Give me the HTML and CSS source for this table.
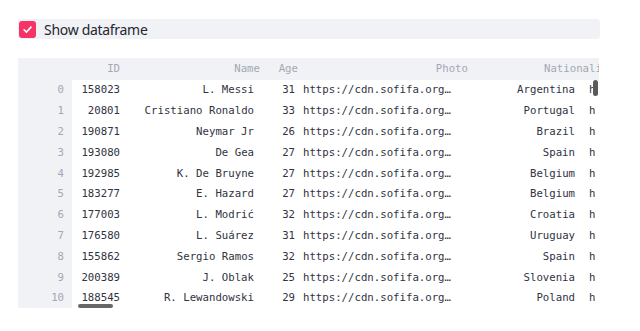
FILE: index.html
```html
<!DOCTYPE html>
<html>
<head>
<meta charset="utf-8">
<link rel="stylesheet" href="styles.css">
</head>
<body>
<div class="app">
  <label class="check-row">
    <span class="box"><svg width="11" height="11" viewBox="0 0 12 12"><path d="M2.3 6.3 L4.9 8.8 L9.8 3.4" fill="none" stroke="#fff" stroke-width="1.8" stroke-linecap="round" stroke-linejoin="round"/></svg></span>
    <span class="label">Show dataframe</span>
  </label>

  <div class="table">
    <div class="row head">
      <div class="c idx"></div>
      <div class="c id">ID</div>
      <div class="c name">Name</div>
      <div class="c age">Age</div>
      <div class="c photo">Photo</div>
      <div class="c nat">Nationality</div>
      <div class="c flag">Flag</div>
    </div>
    <div class="row"><div class="c idx">0</div><div class="c id">158023</div><div class="c name">L. Messi</div><div class="c age">31</div><div class="c photo">https://cdn.sofifa.org…</div><div class="c nat">Argentina</div><div class="c flag">https://cdn</div></div>
    <div class="row"><div class="c idx">1</div><div class="c id">20801</div><div class="c name">Cristiano Ronaldo</div><div class="c age">33</div><div class="c photo">https://cdn.sofifa.org…</div><div class="c nat">Portugal</div><div class="c flag">https://cdn</div></div>
    <div class="row"><div class="c idx">2</div><div class="c id">190871</div><div class="c name">Neymar Jr</div><div class="c age">26</div><div class="c photo">https://cdn.sofifa.org…</div><div class="c nat">Brazil</div><div class="c flag">https://cdn</div></div>
    <div class="row"><div class="c idx">3</div><div class="c id">193080</div><div class="c name">De Gea</div><div class="c age">27</div><div class="c photo">https://cdn.sofifa.org…</div><div class="c nat">Spain</div><div class="c flag">https://cdn</div></div>
    <div class="row"><div class="c idx">4</div><div class="c id">192985</div><div class="c name">K. De Bruyne</div><div class="c age">27</div><div class="c photo">https://cdn.sofifa.org…</div><div class="c nat">Belgium</div><div class="c flag">https://cdn</div></div>
    <div class="row"><div class="c idx">5</div><div class="c id">183277</div><div class="c name">E. Hazard</div><div class="c age">27</div><div class="c photo">https://cdn.sofifa.org…</div><div class="c nat">Belgium</div><div class="c flag">https://cdn</div></div>
    <div class="row"><div class="c idx">6</div><div class="c id">177003</div><div class="c name">L. Modrić</div><div class="c age">32</div><div class="c photo">https://cdn.sofifa.org…</div><div class="c nat">Croatia</div><div class="c flag">https://cdn</div></div>
    <div class="row"><div class="c idx">7</div><div class="c id">176580</div><div class="c name">L. Suárez</div><div class="c age">31</div><div class="c photo">https://cdn.sofifa.org…</div><div class="c nat">Uruguay</div><div class="c flag">https://cdn</div></div>
    <div class="row"><div class="c idx">8</div><div class="c id">155862</div><div class="c name">Sergio Ramos</div><div class="c age">32</div><div class="c photo">https://cdn.sofifa.org…</div><div class="c nat">Spain</div><div class="c flag">https://cdn</div></div>
    <div class="row"><div class="c idx">9</div><div class="c id">200389</div><div class="c name">J. Oblak</div><div class="c age">25</div><div class="c photo">https://cdn.sofifa.org…</div><div class="c nat">Slovenia</div><div class="c flag">https://cdn</div></div>
    <div class="row"><div class="c idx">10</div><div class="c id">188545</div><div class="c name">R. Lewandowski</div><div class="c age">29</div><div class="c photo">https://cdn.sofifa.org…</div><div class="c nat">Poland</div><div class="c flag">https://cdn</div></div>
    <div class="vscroll"></div>
    <div class="hscroll"></div>
  </div>
</div>
</body>
</html>
```

FILE: styles.css
```css
html, body {
  margin: 0;
  padding: 0;
  background: #ffffff;
}

.app {
  padding: 19px 0 0 18px;
  width: 582px;
}

.check-row {
  display: flex;
  align-items: center;
  height: 20px;
  background: #f0f2f6;
  border-radius: 3px;
}

.box {
  width: 17px;
  height: 17px;
  margin-left: 1px;
  border-radius: 3px;
  background: #f63366;
  display: flex;
  align-items: center;
  justify-content: center;
}

.label {
  margin-left: 8px;
  font-family: "Noto Sans", "Open Sans", sans-serif;
  font-size: 14px;
  letter-spacing: -0.3px;
  color: #262730;
}

.table {
  position: relative;
  margin-top: 19px;
  width: 581px;
  overflow: hidden;
  font-family: "DejaVu Sans Mono", "Liberation Mono", monospace;
  font-size: 10.7px;
  color: #31333f;
}

.row {
  display: grid;
  grid-template-columns: 54px 56px 134px 41px 173px 107px 12px;
  height: 20.8px;
  width: 581px;
}

.row.head {
  height: 21.6px;
  background: #f0f2f6;
  color: #a3a8b4;
}

.c {
  display: flex;
  align-items: center;
  justify-content: flex-end;
  white-space: nowrap;
  overflow: visible;
  padding-right: 8px;
}

.idx {
  background: #f0f2f6;
  color: #a3a8b4;
}

.photo {
  justify-content: flex-start;
  padding-right: 0;
}

.flag {
  justify-content: flex-start;
  padding-right: 0;
  padding-left: 6px;
  overflow: hidden;
}

.head .name { padding-right: 2px; }
.head .age { padding-right: 5px; }
.head .photo { justify-content: flex-end; padding-right: 8px; }
.head .nat { justify-content: flex-start; padding-left: 68px; padding-right: 0; }
.head .flag { visibility: hidden; }

.vscroll {
  position: absolute;
  right: 1px;
  top: 22px;
  width: 5px;
  height: 16px;
  border-radius: 3px;
  background: #5a5a5a;
}

.hscroll {
  position: absolute;
  left: 60px;
  top: 246px;
  width: 35px;
  height: 4px;
  border-radius: 2px;
  background: #666666;
}
```
